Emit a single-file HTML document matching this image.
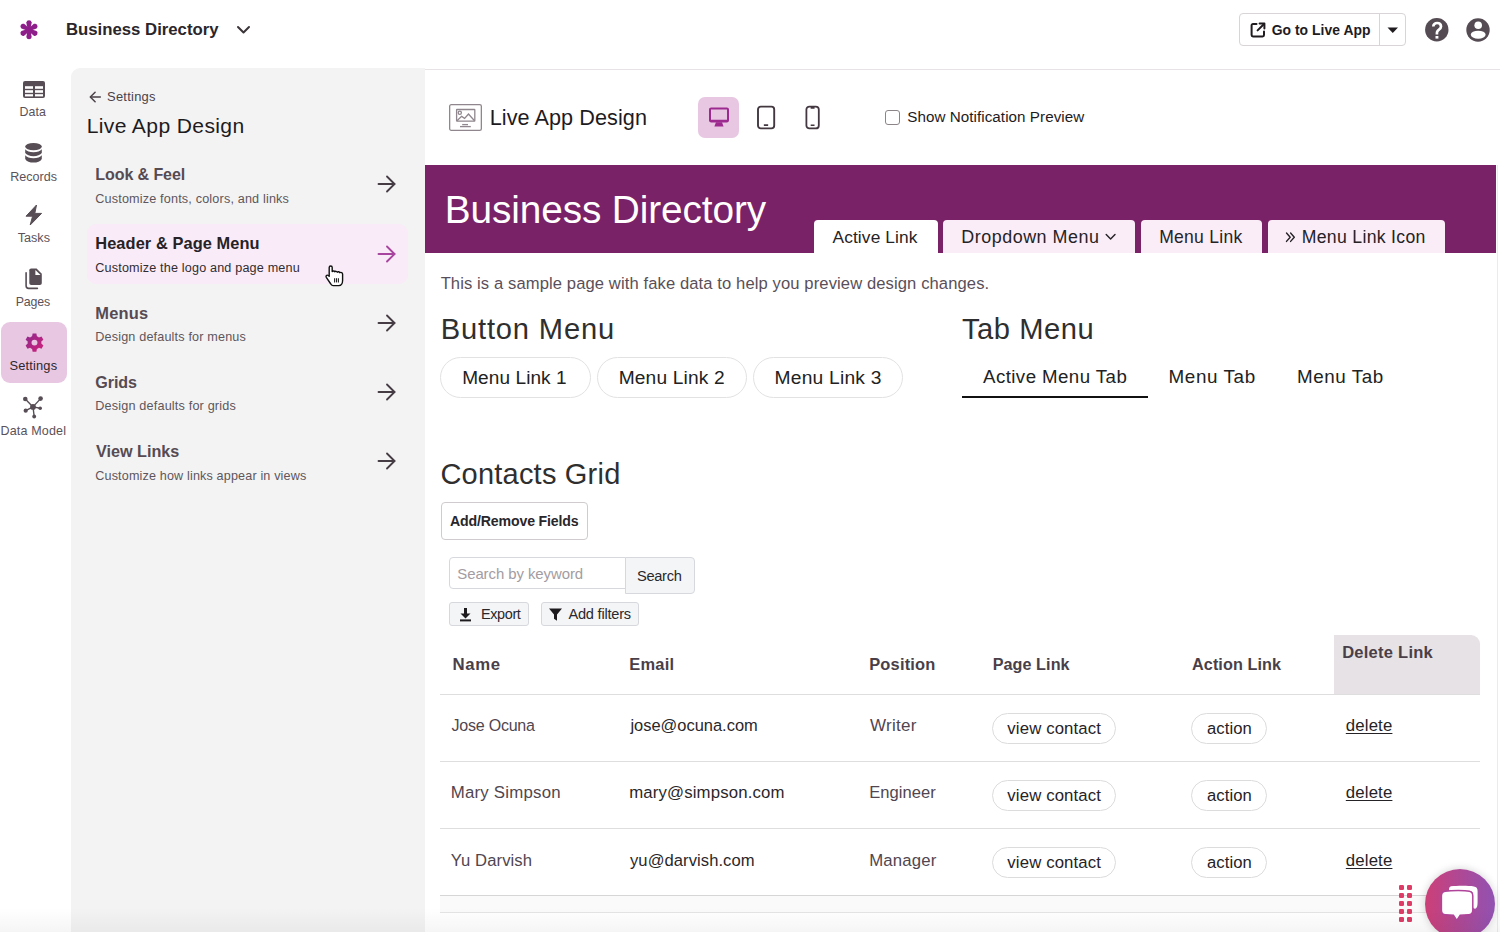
<!DOCTYPE html><html><head><meta charset="utf-8"><title>Live App Design</title><style>
*{box-sizing:border-box;margin:0;padding:0}
html,body{width:1500px;height:932px;overflow:hidden;background:#fff;font-family:"Liberation Sans",sans-serif}
.t{position:absolute;line-height:1;white-space:nowrap}
.a{position:absolute}
svg{position:absolute;overflow:visible}
</style></head><body>
<svg style="left:0;top:0" width="60" height="60" viewBox="0 0 60 60"><g transform="translate(29 29.8)" fill="#8e1f8a"><circle r="3"/><path d="M-1.3 0 L-2.7 -7.2 A2.75 2.75 0 0 1 2.7 -7.2 L1.3 0 Z" transform="rotate(0)"/><path d="M-1.3 0 L-2.7 -7.2 A2.75 2.75 0 0 1 2.7 -7.2 L1.3 0 Z" transform="rotate(60)"/><path d="M-1.3 0 L-2.7 -7.2 A2.75 2.75 0 0 1 2.7 -7.2 L1.3 0 Z" transform="rotate(120)"/><path d="M-1.3 0 L-2.7 -7.2 A2.75 2.75 0 0 1 2.7 -7.2 L1.3 0 Z" transform="rotate(180)"/><path d="M-1.3 0 L-2.7 -7.2 A2.75 2.75 0 0 1 2.7 -7.2 L1.3 0 Z" transform="rotate(240)"/><path d="M-1.3 0 L-2.7 -7.2 A2.75 2.75 0 0 1 2.7 -7.2 L1.3 0 Z" transform="rotate(300)"/></g></svg>
<div class="t " style="left:65.92px;top:22px;font-size:16.76px;color:#2a262b;font-weight:bold;">Business Directory</div>
<svg style="left:236px;top:25px" width="15" height="10" viewBox="0 0 15 10"><path d="M2 2 L7.5 7.5 L13 2" stroke="#3b353a" stroke-width="2" fill="none" stroke-linecap="round" stroke-linejoin="round"/></svg>
<div class="a" style="left:1239px;top:13px;width:167px;height:33px;border:1px solid #d8d4d7;border-radius:4px;background:#fff"></div>
<div class="a" style="left:1379px;top:14px;width:1px;height:31px;background:#d8d4d7"></div>
<svg style="left:1249px;top:21px" width="18" height="18" viewBox="0 0 18 18"><g stroke="#1f1b1f" stroke-width="2" fill="none" stroke-linecap="round" stroke-linejoin="round"><path d="M7.5 3 H4 C3.2 3 2.6 3.6 2.6 4.4 V14 C2.6 14.8 3.2 15.4 4 15.4 H13.6 C14.4 15.4 15 14.8 15 14 V10.5"/><path d="M10.6 2.6 H15.4 V7.4"/><path d="M15 3 L8.6 9.4"/></g></svg><div class="t " style="left:1271.64px;top:24px;font-size:13.92px;color:#1f1b1f;font-weight:bold;letter-spacing:0.046px;">Go to Live App</div>
<svg style="left:1387px;top:27px" width="12" height="7" viewBox="0 0 12 7"><path d="M0.5 0.5 H11 L5.75 6 Z" fill="#1f1b1f"/></svg>
<svg style="left:1425px;top:18px" width="24" height="24" viewBox="0 0 24 24"><circle cx="11.8" cy="11.8" r="11.7" fill="#554b52"/><path d="M8.3 8.6 C8.3 6.4 10 5 12.1 5 C14.4 5 16 6.4 16 8.4 C16 10.9 13.4 11.4 12.2 13.6 C12 14 11.9 14.6 11.9 16.6" stroke="#fff" stroke-width="2.7" fill="none" stroke-linecap="butt"/><rect x="10.5" y="18" width="2.9" height="2.6" fill="#fff"/></svg>
<svg style="left:1466px;top:18px" width="24" height="24" viewBox="0 0 24 24"><circle cx="12" cy="12" r="11.7" fill="#554b52"/><circle cx="12.2" cy="7.2" r="3.8" fill="#fff"/><ellipse cx="12.2" cy="16.7" rx="7.4" ry="4" fill="#fff"/></svg>
<svg style="left:22px;top:80px" width="24" height="19" viewBox="0 0 24 19"><rect x="1" y="1" width="22" height="17" rx="2" fill="#574e55"/><g fill="#fff"><rect x="3" y="6.2" width="8" height="2.6"/><rect x="13" y="6.2" width="8" height="2.6"/><rect x="3" y="10.2" width="8" height="2.6"/><rect x="13" y="10.2" width="8" height="2.6"/><rect x="3" y="14.2" width="8" height="2.2"/><rect x="13" y="14.2" width="8" height="2.2"/></g></svg>
<div class="t " style="left:19.56px;top:106px;font-size:12.4px;color:#5b5259;letter-spacing:0.071px;">Data</div>
<svg style="left:24px;top:142px" width="19" height="22" viewBox="0 0 19 22"><g fill="#574e55"><ellipse cx="9.5" cy="4.6" rx="8.3" ry="3.6"/><path d="M1.2 7.2 C2.6 9.2 5.8 10.2 9.5 10.2 C13.2 10.2 16.4 9.2 17.8 7.2 V11 C16.4 13 13.2 14.2 9.5 14.2 C5.8 14.2 2.6 13 1.2 11 Z"/><path d="M1.2 13.2 C2.6 15.2 5.8 16.2 9.5 16.2 C13.2 16.2 16.4 15.2 17.8 13.2 V17 C16.4 19.6 13.2 20.6 9.5 20.6 C5.8 20.6 2.6 19.6 1.2 17 Z"/></g></svg>
<div class="t " style="left:10.28px;top:171px;font-size:12.56px;color:#5b5259;letter-spacing:-0.011px;">Records</div>
<svg style="left:24px;top:204px" width="20" height="22" viewBox="0 0 20 22"><path d="M12.5 1 L2 12.2 H8.6 L6.2 21 L17.6 9.4 H10.8 Z" fill="#574e55" stroke="#574e55" stroke-width="1" stroke-linejoin="round"/></svg>
<div class="t " style="left:17.64px;top:232px;font-size:12.62px;color:#5b5259;letter-spacing:0.029px;">Tasks</div>
<svg style="left:20px;top:262px" width="28" height="32" viewBox="0 0 28 32"><path d="M11.2 6.4 H16.6 L21.8 11.8 V21 C21.8 22.2 21 22.9 19.8 22.9 H11.3 C10.1 22.9 9.3 22.2 9.3 21 V8.3 C9.3 7.1 10 6.4 11.2 6.4 Z" fill="#574e55"/><path d="M15.4 7.9 V13.1 H20.5 Z" fill="#fff"/><path d="M6.1 10.8 V23.8 C6.1 25.4 7 26.4 8.6 26.4 H17.4" stroke="#574e55" stroke-width="1.6" fill="none" stroke-linecap="round"/></svg>
<div class="t " style="left:15.74px;top:296px;font-size:12.38px;color:#5b5259;letter-spacing:-0.139px;">Pages</div>
<div class="a" style="left:1px;top:322px;width:66px;height:61px;border-radius:9px;background:#e8c7e2"></div>
<svg style="left:22.5px;top:332px" width="23" height="23" viewBox="0 0 22 22"><defs><linearGradient id="gg" x1="0" y1="0" x2="1" y2="1"><stop offset="0" stop-color="#8b2b8d"/><stop offset="1" stop-color="#d2217a"/></linearGradient></defs><path fill="url(#gg)" fill-rule="evenodd" d="M9.2 1.5 H12.8 L13.3 4.1 C14 4.4 14.6 4.7 15.2 5.2 L17.7 4.3 L19.5 7.4 L17.5 9.2 C17.6 9.8 17.6 10.5 17.5 11.1 L19.5 12.9 L17.7 16 L15.2 15.1 C14.6 15.6 14 15.9 13.3 16.2 L12.8 18.8 H9.2 L8.7 16.2 C8 15.9 7.4 15.6 6.8 15.1 L4.3 16 L2.5 12.9 L4.5 11.1 C4.4 10.5 4.4 9.8 4.5 9.2 L2.5 7.4 L4.3 4.3 L6.8 5.2 C7.4 4.7 8 4.4 8.7 4.1 Z M11 7.3 A2.85 2.85 0 1 0 11 13 A2.85 2.85 0 1 0 11 7.3 Z"/></svg>
<div class="t " style="left:9.56px;top:360px;font-size:12.87px;color:#2e282d;letter-spacing:0.156px;">Settings</div>
<svg style="left:22px;top:394px" width="24" height="26" viewBox="0 0 24 26"><g stroke="#574e55" stroke-width="1.4" fill="none"><line x1="11" y1="12.9" x2="3.3" y2="5"/><line x1="11" y1="12.9" x2="18.6" y2="4.6"/><line x1="11" y1="12.9" x2="3.7" y2="16.7"/><line x1="11" y1="12.9" x2="18.2" y2="14.2"/><line x1="11" y1="12.9" x2="12.2" y2="22.5"/></g><g fill="#574e55"><circle cx="11" cy="12.9" r="2.9"/><circle cx="3.3" cy="5" r="2.3"/><circle cx="18.6" cy="4.6" r="2.3"/><circle cx="3.7" cy="16.7" r="2.1"/><circle cx="18.2" cy="14.2" r="1.8"/><circle cx="12.2" cy="22.5" r="1.9"/></g></svg>
<div class="t " style="left:0.56px;top:425px;font-size:12.54px;color:#5b5259;letter-spacing:0.144px;">Data Model</div>
<div class="a" style="left:71px;top:68px;width:354px;height:864px;background:#f3f3f3;border-top-left-radius:9px"></div>
<svg style="left:89.2px;top:91px" width="13" height="12" viewBox="0 0 13 12"><g stroke="#4a4248" stroke-width="1.5" fill="none" stroke-linecap="round" stroke-linejoin="round"><path d="M11.3 6 H1.6"/><path d="M6.1 1.2 L1.3 6 L6.1 10.8"/></g></svg>
<div class="t " style="left:107.02px;top:91px;font-size:12.93px;color:#4a4248;letter-spacing:0.254px;">Settings</div>
<div class="t " style="left:86.66px;top:115px;font-size:21.1px;color:#1e1b1e;letter-spacing:0.361px;">Live App Design</div>
<div class="a" style="left:87px;top:224px;width:321px;height:60px;border-radius:9px;background:#f9ebf7"></div>
<div class="t " style="left:95.28px;top:166px;font-size:16.04px;color:#564b53;font-weight:bold;letter-spacing:-0.089px;">Look &amp; Feel</div>
<div class="t " style="left:95.28px;top:193px;font-size:12.65px;color:#5e565c;letter-spacing:0.163px;">Customize fonts, colors, and links</div>
<svg style="left:377px;top:175.4px" width="20" height="18" viewBox="0 0 20 18"><g stroke="#463c44" stroke-width="1.85" fill="none" stroke-linecap="round" stroke-linejoin="round"><path d="M1.5 9 H17.5"/><path d="M10 1.5 L17.5 9 L10 16.5"/></g></svg>
<div class="t " style="left:95.28px;top:235px;font-size:16.36px;color:#262226;font-weight:bold;letter-spacing:0.092px;">Header &amp; Page Menu</div>
<div class="t " style="left:95.28px;top:262px;font-size:12.62px;color:#322c31;letter-spacing:0.173px;">Customize the logo and page menu</div>
<svg style="left:377px;top:244.7px" width="20" height="18" viewBox="0 0 20 18"><g stroke="#a8469f" stroke-width="1.85" fill="none" stroke-linecap="round" stroke-linejoin="round"><path d="M1.5 9 H17.5"/><path d="M10 1.5 L17.5 9 L10 16.5"/></g></svg>
<div class="t " style="left:95.28px;top:305px;font-size:16.44px;color:#564b53;font-weight:bold;letter-spacing:0.192px;">Menus</div>
<div class="t " style="left:95.28px;top:331px;font-size:12.63px;color:#5e565c;letter-spacing:0.163px;">Design defaults for menus</div>
<svg style="left:377px;top:313.9px" width="20" height="18" viewBox="0 0 20 18"><g stroke="#463c44" stroke-width="1.85" fill="none" stroke-linecap="round" stroke-linejoin="round"><path d="M1.5 9 H17.5"/><path d="M10 1.5 L17.5 9 L10 16.5"/></g></svg>
<div class="t " style="left:95.28px;top:374px;font-size:16.09px;color:#564b53;font-weight:bold;letter-spacing:-0.069px;">Grids</div>
<div class="t " style="left:95.28px;top:400px;font-size:12.66px;color:#5e565c;letter-spacing:0.167px;">Design defaults for grids</div>
<svg style="left:377px;top:383.1px" width="20" height="18" viewBox="0 0 20 18"><g stroke="#463c44" stroke-width="1.85" fill="none" stroke-linecap="round" stroke-linejoin="round"><path d="M1.5 9 H17.5"/><path d="M10 1.5 L17.5 9 L10 16.5"/></g></svg>
<div class="t " style="left:96.08px;top:443px;font-size:16.19px;color:#564b53;font-weight:bold;letter-spacing:-0.011px;">View Links</div>
<div class="t " style="left:95.28px;top:470px;font-size:12.6px;color:#5e565c;letter-spacing:0.153px;">Customize how links appear in views</div>
<svg style="left:377px;top:452.4px" width="20" height="18" viewBox="0 0 20 18"><g stroke="#463c44" stroke-width="1.85" fill="none" stroke-linecap="round" stroke-linejoin="round"><path d="M1.5 9 H17.5"/><path d="M10 1.5 L17.5 9 L10 16.5"/></g></svg>
<svg style="left:322px;top:262px" width="26" height="28" viewBox="0 0 26 28"><path d="M7.2 5.6 C7.2 3.4 10.2 3.4 10.2 5.6 V9.6 C10.9 8.8 12.3 8.9 12.7 9.8 C13.4 9 14.9 9.2 15.3 10.2 C16 9.5 17.4 9.7 17.8 10.7 C18.7 10.1 20.6 10.5 20.6 12.2 V18.6 C20.6 21 19.2 23.6 17 23.6 H11.2 C10.2 23.6 9.4 23 8.8 22 L4.3 15.4 C3.4 14 4.9 12.5 6.3 13.5 L7.2 14.3 Z" fill="#fff" stroke="#111" stroke-width="1.4" stroke-linejoin="round"/><g stroke="#222" stroke-width="1.1"><line x1="12.6" y1="16.2" x2="12.6" y2="20.4"/><line x1="14.5" y1="16.2" x2="14.5" y2="20.4"/><line x1="16.4" y1="16.2" x2="16.4" y2="20.4"/></g></svg>
<div class="a" style="left:425px;top:69px;width:1075px;height:1px;background:#e6e2e5"></div>
<svg style="left:449px;top:104px" width="33" height="27" viewBox="0 0 33 27"><g fill="none" stroke="#8f878d" stroke-width="1.3"><rect x="0.65" y="0.65" width="31.7" height="25.7" rx="1.6"/><rect x="7.6" y="5.5" width="18.2" height="11.7" rx="0.4"/><path d="M8 16.8 L12.6 12.4 L15.6 14.4 L19.5 10 L25.5 16.8"/><circle cx="10.8" cy="8.8" r="1.6"/><line x1="13.2" y1="20.6" x2="19" y2="20.6"/><line x1="11" y1="22.6" x2="21.8" y2="22.6"/></g></svg>
<div class="t " style="left:489.66px;top:107px;font-size:21.64px;color:#1e1b1e;letter-spacing:0.069px;">Live App Design</div>
<div class="a" style="left:698px;top:97px;width:41px;height:41px;border-radius:7px;background:#e8c7e2"></div>
<svg style="left:708px;top:107px" width="22" height="21" viewBox="0 0 22 21"><g fill="#9c2a8f"><path fill-rule="evenodd" d="M3.2 0.6 H18.8 C20.1 0.6 21 1.5 21 2.8 V13.3 C21 14.6 20.1 15.5 18.8 15.5 H3.2 C1.9 15.5 1 14.6 1 13.3 V2.8 C1 1.5 1.9 0.6 3.2 0.6 Z M3 2.4 V12.8 H19 V2.4 Z"/><path d="M8 15.3 H14 L15.6 19.6 H6.4 Z"/></g></svg>
<svg style="left:756px;top:105px" width="20" height="25" viewBox="0 0 20 25"><g fill="none" stroke="#433840" stroke-width="1.9"><rect x="2" y="1.6" width="16.2" height="21.8" rx="2.8"/></g><rect x="7.8" y="19.2" width="4.4" height="1.7" rx="0.4" fill="#433840"/></svg>
<svg style="left:804px;top:105px" width="17" height="25" viewBox="0 0 17 25"><g fill="none" stroke="#433840" stroke-width="1.8"><rect x="2.4" y="1.6" width="12.4" height="21.8" rx="3"/></g><rect x="6.6" y="2" width="4" height="1.8" rx="0.5" fill="#433840"/><rect x="6.6" y="19.4" width="4" height="1.5" rx="0.4" fill="#433840"/></svg>
<div class="a" style="left:885px;top:110px;width:15px;height:15px;border:1.5px solid #8b8589;border-radius:3px;background:#fff"></div>
<div class="t " style="left:907.28px;top:109px;font-size:15.2px;color:#1e1b1e;letter-spacing:0.058px;">Show Notification Preview</div>
<div class="a" style="left:425px;top:165px;width:1071px;height:88px;background:#7a2268"></div>
<div class="a" style="left:1497px;top:165px;width:1px;height:767px;background:#ebebeb"></div>
<div class="t " style="left:444.68px;top:191px;font-size:38.78px;color:#ffffff;letter-spacing:-0.096px;">Business Directory</div>
<div class="a" style="left:813.5px;top:220px;width:124.2px;height:33px;background:#ffffff;border-radius:4px 4px 0 0"></div>
<div class="t " style="left:832.46px;top:229px;font-size:17.32px;color:#262326;letter-spacing:0.135px;">Active Link</div>
<div class="a" style="left:943.0px;top:220px;width:191.8px;height:33px;background:#faedf8;border-radius:4px 4px 0 0"></div>
<div class="t " style="left:961.20px;top:229px;font-size:17.91px;color:#262326;letter-spacing:0.535px;">Dropdown Menu</div>
<div class="a" style="left:1140.6px;top:220px;width:121.4px;height:33px;background:#faedf8;border-radius:4px 4px 0 0"></div>
<div class="t " style="left:1159.20px;top:229px;font-size:17.52px;color:#262326;letter-spacing:0.277px;">Menu Link</div>
<div class="a" style="left:1268.0px;top:220px;width:176.5px;height:33px;background:#faedf8;border-radius:4px 4px 0 0"></div>
<div class="t " style="left:1301.66px;top:229px;font-size:17.65px;color:#262326;letter-spacing:0.316px;">Menu Link Icon</div>
<svg style="left:1104px;top:233px" width="12" height="9" viewBox="0 0 12 9"><path d="M2.2 1.6 L6.6 6 L11 1.6" stroke="#262326" stroke-width="1.45" fill="none" stroke-linecap="round" stroke-linejoin="round"/></svg>
<svg style="left:1285px;top:231px" width="11" height="13" viewBox="0 0 11 13"><g stroke="#262326" stroke-width="1.4" fill="none" stroke-linecap="round" stroke-linejoin="round"><path d="M1.5 2 L5.2 6.2 L1.5 10.4"/><path d="M5.6 2 L9.3 6.2 L5.6 10.4"/></g></svg>
<div class="t " style="left:440.64px;top:276px;font-size:16.58px;color:#5a4f58;letter-spacing:0.107px;">This is a sample page with fake data to help you preview design changes.</div>
<div class="t " style="left:440.76px;top:315px;font-size:29.12px;color:#2f2f2f;letter-spacing:0.829px;">Button Menu</div>
<div class="a" style="left:440.3px;top:356.5px;width:150.3px;height:41px;border:1.5px solid #e2e2e2;border-radius:21px;background:#fff"></div>
<div class="t " style="left:462.20px;top:368px;font-size:19.02px;color:#222;letter-spacing:0.086px;">Menu Link 1</div>
<div class="a" style="left:596.8px;top:356.5px;width:150.0px;height:41px;border:1.5px solid #e2e2e2;border-radius:21px;background:#fff"></div>
<div class="t " style="left:618.66px;top:368px;font-size:19.16px;color:#222;letter-spacing:0.164px;">Menu Link 2</div>
<div class="a" style="left:753.0px;top:356.5px;width:150.0px;height:41px;border:1.5px solid #e2e2e2;border-radius:21px;background:#fff"></div>
<div class="t " style="left:774.56px;top:368px;font-size:19.23px;color:#222;letter-spacing:0.208px;">Menu Link 3</div>
<div class="t " style="left:961.92px;top:315px;font-size:29.13px;color:#2f2f2f;letter-spacing:0.571px;">Tab Menu</div>
<div class="t " style="left:983.00px;top:368px;font-size:18.69px;color:#222;letter-spacing:0.426px;">Active Menu Tab</div>
<div class="t " style="left:1168.56px;top:368px;font-size:18.85px;color:#222;letter-spacing:0.604px;">Menu Tab</div>
<div class="t " style="left:1297.02px;top:368px;font-size:18.81px;color:#222;letter-spacing:0.578px;">Menu Tab</div>
<div class="a" style="left:962px;top:395.5px;width:185.6px;height:2.8px;background:#111"></div>
<div class="t " style="left:440.48px;top:460px;font-size:29.03px;color:#2f2f2f;letter-spacing:0.202px;">Contacts Grid</div>
<div class="a" style="left:440.5px;top:502px;width:147.5px;height:38px;border:1px solid #cfcbce;border-radius:4px;background:#fff"></div>
<div class="t " style="left:450.00px;top:514px;font-size:14.13px;color:#2a262a;font-weight:bold;letter-spacing:-0.150px;">Add/Remove Fields</div>
<div class="a" style="left:448.5px;top:557px;width:177px;height:32px;border:1px solid #d6d8de;border-radius:4px 0 0 4px;background:#fff"></div>
<div class="t " style="left:457.28px;top:567px;font-size:14.94px;color:#a39ca2;letter-spacing:-0.074px;">Search by keyword</div>
<div class="a" style="left:624.5px;top:557px;width:70.5px;height:36.5px;border:1px solid #d6d8de;border-radius:0 4px 4px 0;background:#f4f5f7"></div>
<div class="t " style="left:636.92px;top:569px;font-size:14.64px;color:#2b282b;letter-spacing:-0.286px;">Search</div>
<div class="a" style="left:448.5px;top:602px;width:80.5px;height:24px;border:1px solid #d6d8de;border-radius:3px;background:#f4f5f7"></div>
<svg style="left:459px;top:607px" width="13" height="15" viewBox="0 0 13 15"><g fill="#1e1b1e"><rect x="5" y="1" width="3" height="6.5"/><path d="M1.5 6.5 H11.5 L6.5 11.5 Z"/><rect x="1" y="12.4" width="11" height="2"/></g></svg>
<div class="t " style="left:480.92px;top:607px;font-size:14.46px;color:#2b282b;letter-spacing:-0.358px;">Export</div>
<div class="a" style="left:541px;top:602px;width:97.5px;height:24px;border:1px solid #d6d8de;border-radius:3px;background:#f4f5f7"></div>
<svg style="left:548px;top:607px" width="15" height="15" viewBox="0 0 15 15"><path d="M1 1.5 H14 L9 7.5 V13.8 L6 11.8 V7.5 Z" fill="#1e1b1e"/></svg>
<div class="t " style="left:568.46px;top:607px;font-size:14.6px;color:#2b282b;letter-spacing:-0.218px;">Add filters</div>
<div class="a" style="left:1333.6px;top:634.5px;width:146.6px;height:59.5px;background:#e7e2e5;border-radius:0 9px 0 0"></div>
<div class="t " style="left:452.46px;top:657px;font-size:16.75px;color:#4a3f48;font-weight:bold;letter-spacing:0.632px;">Name</div>
<div class="t " style="left:629.20px;top:656px;font-size:16.47px;color:#4a3f48;font-weight:bold;letter-spacing:0.271px;">Email</div>
<div class="t " style="left:869.20px;top:656px;font-size:16.43px;color:#4a3f48;font-weight:bold;letter-spacing:0.203px;">Position</div>
<div class="t " style="left:992.64px;top:656px;font-size:16.18px;color:#4a3f48;font-weight:bold;letter-spacing:0.069px;">Page Link</div>
<div class="t " style="left:1192.00px;top:656px;font-size:16.22px;color:#4a3f48;font-weight:bold;letter-spacing:0.088px;">Action Link</div>
<div class="t " style="left:1342.20px;top:645px;font-size:16.53px;color:#4a3f48;font-weight:bold;letter-spacing:0.245px;">Delete Link</div>
<div class="a" style="left:440px;top:694px;width:1040px;height:1.3px;background:#dedede"></div>
<div class="a" style="left:440px;top:761px;width:1040px;height:1.3px;background:#dedede"></div>
<div class="a" style="left:440px;top:828px;width:1040px;height:1.3px;background:#dedede"></div>
<div class="a" style="left:440px;top:895px;width:1040px;height:18px;background:#fafafa;border-top:1.6px solid #d6d6d6;border-bottom:1px solid #e4e4e4"></div>
<div class="t " style="left:451.54px;top:717px;font-size:16.06px;color:#51464f;letter-spacing:-0.244px;">Jose Ocuna</div>
<div class="t " style="left:630.41px;top:717px;font-size:16.47px;color:#2a272a;">jose@ocuna.com</div>
<div class="t " style="left:870.00px;top:717px;font-size:17.02px;color:#51464f;letter-spacing:0.287px;">Writer</div>
<div class="a" style="left:992px;top:712.5px;width:124px;height:31px;border:1.3px solid #dcdcdc;border-radius:16px;background:#fff"></div>
<div class="t " style="left:1007.36px;top:721px;font-size:16.75px;color:#262326;letter-spacing:0.130px;">view contact</div>
<div class="a" style="left:1191.4px;top:712.5px;width:75.5px;height:31px;border:1.3px solid #dcdcdc;border-radius:16px;background:#fff"></div>
<div class="t " style="left:1207.00px;top:721px;font-size:16.61px;color:#262326;letter-spacing:0.074px;">action</div>
<div class="t " style="left:1345.82px;top:718px;font-size:16.76px;color:#262326;letter-spacing:0.158px;text-decoration:underline;text-underline-offset:2px">delete</div>
<div class="t " style="left:450.74px;top:785px;font-size:16.84px;color:#51464f;letter-spacing:0.207px;">Mary Simpson</div>
<div class="t " style="left:629.20px;top:785px;font-size:16.75px;color:#2a272a;letter-spacing:0.159px;">mary@simpson.com</div>
<div class="t " style="left:869.20px;top:785px;font-size:16.56px;color:#51464f;letter-spacing:0.042px;">Engineer</div>
<div class="a" style="left:992px;top:779.5px;width:124px;height:31px;border:1.3px solid #dcdcdc;border-radius:16px;background:#fff"></div>
<div class="t " style="left:1007.36px;top:788px;font-size:16.75px;color:#262326;letter-spacing:0.130px;">view contact</div>
<div class="a" style="left:1191.4px;top:779.5px;width:75.5px;height:31px;border:1.3px solid #dcdcdc;border-radius:16px;background:#fff"></div>
<div class="t " style="left:1207.00px;top:788px;font-size:16.61px;color:#262326;letter-spacing:0.074px;">action</div>
<div class="t " style="left:1345.82px;top:785px;font-size:16.76px;color:#262326;letter-spacing:0.158px;text-decoration:underline;text-underline-offset:2px">delete</div>
<div class="t " style="left:450.74px;top:853px;font-size:16.65px;color:#51464f;letter-spacing:0.093px;">Yu Darvish</div>
<div class="t " style="left:630.00px;top:853px;font-size:16.59px;color:#2a272a;letter-spacing:0.066px;">yu@darvish.com</div>
<div class="t " style="left:869.20px;top:853px;font-size:16.76px;color:#51464f;letter-spacing:0.190px;">Manager</div>
<div class="a" style="left:992px;top:846.5px;width:124px;height:31px;border:1.3px solid #dcdcdc;border-radius:16px;background:#fff"></div>
<div class="t " style="left:1007.36px;top:855px;font-size:16.75px;color:#262326;letter-spacing:0.130px;">view contact</div>
<div class="a" style="left:1191.4px;top:846.5px;width:75.5px;height:31px;border:1.3px solid #dcdcdc;border-radius:16px;background:#fff"></div>
<div class="t " style="left:1207.00px;top:855px;font-size:16.61px;color:#262326;letter-spacing:0.074px;">action</div>
<div class="t " style="left:1345.82px;top:853px;font-size:16.76px;color:#262326;letter-spacing:0.158px;text-decoration:underline;text-underline-offset:2px">delete</div>
<div class="a" style="left:1399.3px;top:884.80px;width:4.8px;height:4.8px;border-radius:1.3px;background:#dc3c66"></div>
<div class="a" style="left:1407.4px;top:884.80px;width:4.8px;height:4.8px;border-radius:1.3px;background:#dc3c66"></div>
<div class="a" style="left:1399.3px;top:892.85px;width:4.8px;height:4.8px;border-radius:1.3px;background:#dc3c66"></div>
<div class="a" style="left:1407.4px;top:892.85px;width:4.8px;height:4.8px;border-radius:1.3px;background:#dc3c66"></div>
<div class="a" style="left:1399.3px;top:900.90px;width:4.8px;height:4.8px;border-radius:1.3px;background:#dc3c66"></div>
<div class="a" style="left:1407.4px;top:900.90px;width:4.8px;height:4.8px;border-radius:1.3px;background:#dc3c66"></div>
<div class="a" style="left:1399.3px;top:908.95px;width:4.8px;height:4.8px;border-radius:1.3px;background:#dc3c66"></div>
<div class="a" style="left:1407.4px;top:908.95px;width:4.8px;height:4.8px;border-radius:1.3px;background:#dc3c66"></div>
<div class="a" style="left:1399.3px;top:917.00px;width:4.8px;height:4.8px;border-radius:1.3px;background:#dc3c66"></div>
<div class="a" style="left:1407.4px;top:917.00px;width:4.8px;height:4.8px;border-radius:1.3px;background:#dc3c66"></div>
<div class="a" style="left:1425px;top:868.5px;width:70px;height:70px;border-radius:50%;background:linear-gradient(90deg,#cc3f78,#9152b2);box-shadow:0 0 8px rgba(0,0,0,0.18)"></div>
<svg style="left:1438px;top:882px" width="44" height="42" viewBox="0 0 44 42"><path d="M13 4.3 C19 3.6 31 3.6 35.8 4.4 C38.4 4.9 39.6 6 39.6 9 V20 C39.6 23.5 39.2 25.4 37.8 26.6 C36 26.9 35 26 35 25 V13 C35 10 34 9.2 31 9 L11 8.6 C10.8 6 11.6 4.6 13 4.3 Z" fill="#fff"/><path d="M7 9.2 C14 8.3 27 8.3 31.5 9.2 C33.8 9.7 34.8 11 34.8 14 V28 C34.8 31 33.5 32.6 30.5 32.8 L22.2 33.2 L18.8 38.4 L15.4 33.2 L7.5 32.8 C4.6 32.6 3.4 31 3.4 28 V14 C3.4 11 4.5 9.6 7 9.2 Z" fill="#fff" stroke="#b0449a" stroke-width="1.5"/></svg>
<div class="a" style="left:0;top:908px;width:1500px;height:24px;background:linear-gradient(180deg,rgba(0,0,0,0),rgba(0,0,0,0.04));pointer-events:none"></div>
</body></html>
